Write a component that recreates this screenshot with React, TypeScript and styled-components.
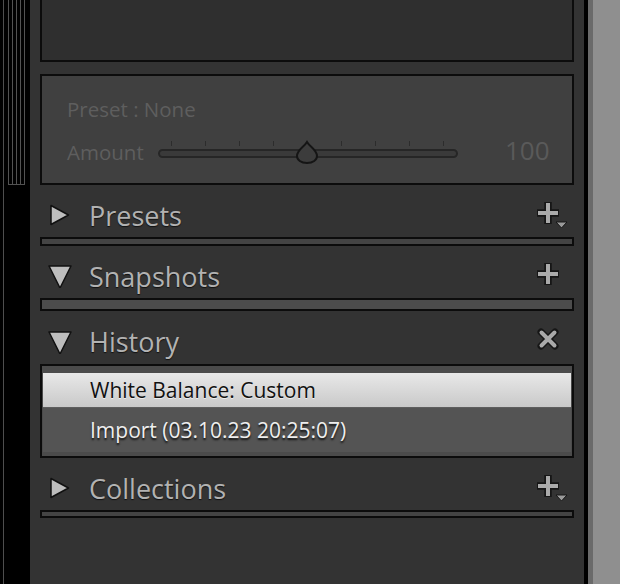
import React from 'react';
import styled, { createGlobalStyle } from 'styled-components';

const GlobalStyle = createGlobalStyle`
    html, body {
        margin: 0;
        padding: 0;
        background: #000;
        overflow: hidden;
    }
    body {
        font-family: "Open Sans", "Liberation Sans", sans-serif;
    }
`;

const Screen = styled.div`
    display: flex;
    width: 620px;
    height: 584px;
    background: #000;
`;

const Grip = styled.div`
    display: flex;
    align-items: flex-start;
    width: 30px;
    flex-shrink: 0;
    background: #000;
`;

const GripRule = styled.div`
    width: 1px;
    height: 100%;
    margin-left: 3px;
    background: #4e4e4e;
`;

const GripLines = styled.div`
    width: 17px;
    height: 184px;
    margin-left: 4px;
    background: repeating-linear-gradient(to right, #525252 0 1px, transparent 1px 4px);
    border-bottom: 1px solid #525252;
`;

const Panel = styled.div`
    display: flex;
    flex-direction: column;
    width: 554px;
    flex-shrink: 0;
    padding: 0 10px;
    box-sizing: border-box;
    background: #333333;
`;

const EdgeDark = styled.div`
    width: 4px;
    background: #000;
`;

const EdgeMid = styled.div`
    width: 5px;
    background: #6a6a6a;
`;

const EdgeLight = styled.div`
    flex: 1;
    background: #8f8f8f;
`;

const TopBox = styled.div`
    height: 62px;
    box-sizing: border-box;
    border: 2px solid #0c0c0c;
    border-top: none;
    background: #2f2f2f;
`;

const PresetBox = styled.div`
    margin-top: 12px;
    height: 111px;
    box-sizing: border-box;
    border: 2px solid #0c0c0c;
    background: #404040;
    padding: 20px 0 0 25px;
    color: #5e5e5e;
    font-size: 20.5px;
`;

const PresetLabel = styled.div`
    line-height: 26px;
    height: 26px;
`;

const AmountRow = styled.div`
    display: flex;
    align-items: center;
    margin-top: 18px;
    height: 24px;
`;

const AmountLabel = styled.span`
    width: 91px;
`;

const AmountValue = styled.span`
    margin-left: 45px;
    font-size: 26px;
    color: #5a5a5a;
    margin-top: -4px;
`;

const Header = styled.div<{ h: number }>`
    display: flex;
    align-items: center;
    height: ${(p) => p.h}px;
    box-sizing: border-box;
    padding: 8px 4px 0 8px;
`;

const HeaderTitle = styled.span`
    flex: 1;
    margin-left: 17px;
    font-size: 27px;
    color: #b2b2b2;
    text-shadow: 0 1px 1px #111;
`;

const Bar = styled.div<{ h: number; fill: string }>`
    height: ${(p) => p.h}px;
    box-sizing: border-box;
    border: 2px solid #0c0c0c;
    background: ${(p) => p.fill};
`;

const HistoryBox = styled.div`
    height: 94px;
    box-sizing: border-box;
    border: 2px solid #0c0c0c;
    background: #4b4b4b;
    padding: 7px 1px 4px 1px;
    display: flex;
    flex-direction: column;
`;

const HistoryRow = styled.div<{ selected?: boolean }>`
    height: ${(p) => (p.selected ? 34 : 45)}px;
    display: flex;
    align-items: center;
    padding-left: 47px;
    font-size: 21px;
    color: ${(p) => (p.selected ? '#111' : '#eeeeee')};
    background: ${(p) =>
        p.selected ? 'linear-gradient(#e8e8e8, #c9c9c9)' : '#545454'};
    text-shadow: ${(p) => (p.selected ? '0 1px 0 #eee' : '0 2px 2px #111')};
    box-shadow: ${(p) => (p.selected ? 'none' : 'inset 0 3px 0 -2px #5e5e5e')};
`;

const Spacer = styled.div`
    flex: 1;
`;

const Slider = () => (
    <svg width="302" height="26" viewBox="0 0 302 26">
        {[13, 47, 81, 115, 183, 217, 251, 285].map((x) => (
            <rect key={x} x={x} y="2" width="1" height="5" fill="#2c2c2c" />
        ))}
        <rect x="1" y="11" width="298" height="7" rx="3.5" fill="#3a3a3a" stroke="#262626" strokeWidth="2" />
        <path d="M149 3 C152 8 159 11 159 17 C159 21 155 24 149 24 C143 24 139 21 139 17 C139 11 146 8 149 3 Z"
            fill="#3c3c3c" stroke="#151515" strokeWidth="2" />
    </svg>
);

const Triangle = ({ open }: { open: boolean }) => (
    <svg width="24" height="24" viewBox="0 0 24 24">
        {open ? (
            <path d="M1 2 L23 2 L12 24 Z" fill="#bdbdbd" stroke="#111" strokeWidth="1.5" strokeLinejoin="round" />
        ) : (
            <path d="M3 2.5 L20.5 12 L3 21.5 Z" fill="#bdbdbd" stroke="#111" strokeWidth="1.5" strokeLinejoin="round" />
        )}
    </svg>
);

const PlusIcon = ({ menu }: { menu?: boolean }) => (
    <svg width="34" height="30" viewBox="0 0 34 30">
        <path d="M12 2 V24 M1 13 H23" stroke="#161616" strokeWidth="7.5" />
        <path d="M12 3 V23 M2 13 H22" stroke="#aaaaaa" strokeWidth="4" />
        {menu && <path d="M20 22 H31 L25.5 28 Z" fill="#9a9a9a" stroke="#161616" strokeWidth="1" />}
    </svg>
);

const CloseIcon = () => (
    <svg width="34" height="30" viewBox="0 0 34 30">
        <path d="M5 5 L19 19 M19 5 L5 19" stroke="#161616" strokeWidth="7" strokeLinecap="round" />
        <path d="M5.5 5.5 L18.5 18.5 M18.5 5.5 L5.5 18.5" stroke="#a9a9a9" strokeWidth="4" strokeLinecap="round" />
    </svg>
);

export default function App() {
    return (
        <>
            <GlobalStyle />
            <Screen>
                <Grip>
                    <GripRule />
                    <GripLines />
                </Grip>
                <Panel>
                    <TopBox />
                    <PresetBox>
                        <PresetLabel>Preset : None</PresetLabel>
                        <AmountRow>
                            <AmountLabel>Amount</AmountLabel>
                            <Slider />
                            <AmountValue>100</AmountValue>
                        </AmountRow>
                    </PresetBox>

                    <Header h={52}>
                        <Triangle open={false} />
                        <HeaderTitle>Presets</HeaderTitle>
                        <PlusIcon menu />
                    </Header>
                    <Bar h={9} fill="#444444" />

                    <Header h={52}>
                        <Triangle open />
                        <HeaderTitle>Snapshots</HeaderTitle>
                        <PlusIcon />
                    </Header>
                    <Bar h={13} fill="#4c4c4c" />

                    <Header h={53}>
                        <Triangle open />
                        <HeaderTitle>History</HeaderTitle>
                        <CloseIcon />
                    </Header>
                    <HistoryBox>
                        <HistoryRow selected>White Balance: Custom</HistoryRow>
                        <HistoryRow>Import (03.10.23 20:25:07)</HistoryRow>
                    </HistoryBox>

                    <Header h={52}>
                        <Triangle open={false} />
                        <HeaderTitle>Collections</HeaderTitle>
                        <PlusIcon menu />
                    </Header>
                    <Bar h={8} fill="#444444" />
                    <Spacer />
                </Panel>
                <EdgeDark />
                <EdgeMid />
                <EdgeLight />
            </Screen>
        </>
    );
}
